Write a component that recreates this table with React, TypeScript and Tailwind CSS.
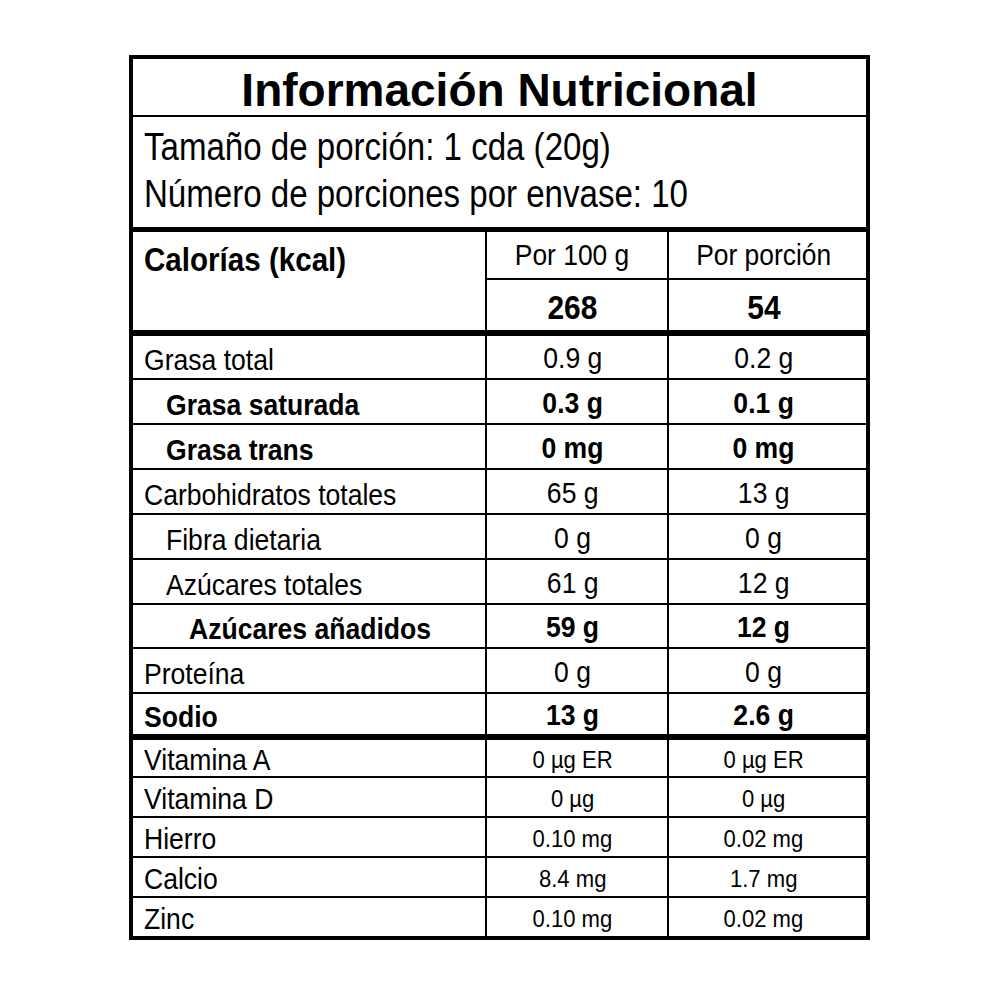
import React from 'react';

type Row = {
  label: string;
  per100: string;
  perPortion: string;
  bold?: boolean;
  indent?: 0 | 1 | 2;
  h: string;
  border: string;
};

const nutrients: Row[] = [
  { label: 'Grasa total', per100: '0.9 g', perPortion: '0.2 g', h: 'h-[44px]', border: 'border-b-2' },
  { label: 'Grasa saturada', per100: '0.3 g', perPortion: '0.1 g', bold: true, indent: 1, h: 'h-[45px]', border: 'border-b-2' },
  { label: 'Grasa trans', per100: '0 mg', perPortion: '0 mg', bold: true, indent: 1, h: 'h-[45px]', border: 'border-b-2' },
  { label: 'Carbohidratos totales', per100: '65 g', perPortion: '13 g', h: 'h-[45px]', border: 'border-b-2' },
  { label: 'Fibra dietaria', per100: '0 g', perPortion: '0 g', indent: 1, h: 'h-[45px]', border: 'border-b-2' },
  { label: 'Azúcares totales', per100: '61 g', perPortion: '12 g', indent: 1, h: 'h-[45px]', border: 'border-b-2' },
  { label: 'Azúcares añadidos', per100: '59 g', perPortion: '12 g', bold: true, indent: 2, h: 'h-[44px]', border: 'border-b-2' },
  { label: 'Proteína', per100: '0 g', perPortion: '0 g', h: 'h-[45px]', border: 'border-b-2' },
  { label: 'Sodio', per100: '13 g', perPortion: '2.6 g', bold: true, h: 'h-[46px]', border: 'border-b-[6px]' },
];

const minerals: Row[] = [
  { label: 'Vitamina A', per100: '0 µg ER', perPortion: '0 µg ER', h: 'h-[38px]', border: 'border-b-2' },
  { label: 'Vitamina D', per100: '0 µg', perPortion: '0 µg', h: 'h-[40px]', border: 'border-b-2' },
  { label: 'Hierro', per100: '0.10 mg', perPortion: '0.02 mg', h: 'h-[40px]', border: 'border-b-2' },
  { label: 'Calcio', per100: '8.4 mg', perPortion: '1.7 mg', h: 'h-[40px]', border: 'border-b-2' },
  { label: 'Zinc', per100: '0.10 mg', perPortion: '0.02 mg', h: 'h-[38px]', border: '' },
];

const indentClass = ['pl-[11px]', 'pl-[33px]', 'pl-[56px]'];

const NutrientRow: React.FC<{ row: Row }> = ({ row }) => {
  const weight = row.bold ? 'font-bold' : 'font-normal';
  return (
    <div className={`grid grid-cols-[354px_182px_197px] border-black ${row.h} ${row.border}`}>
      <div className={`flex items-center border-r-2 border-black pt-[6px] ${indentClass[row.indent ?? 0]}`}>
        <span className={`inline-block origin-left scale-x-[0.9] text-[29.5px] leading-none whitespace-nowrap ${weight}`}>{row.label}</span>
      </div>
      <div className="flex items-center justify-center border-r-2 border-black pt-[2px] pr-[9px]">
        <span className={`inline-block scale-x-[0.9] text-[29.5px] leading-none ${weight}`}>{row.per100}</span>
      </div>
      <div className="flex items-center justify-center pt-[2px] pr-[8px]">
        <span className={`inline-block scale-x-[0.9] text-[29.5px] leading-none ${weight}`}>{row.perPortion}</span>
      </div>
    </div>
  );
};

const MineralRow: React.FC<{ row: Row }> = ({ row }) => (
  <div className={`grid grid-cols-[354px_182px_197px] border-black ${row.h} ${row.border}`}>
    <div className="flex items-center border-r-2 border-black pl-[11px] pt-[4px]">
      <span className="inline-block origin-left scale-x-[0.9] text-[29.5px] leading-none">{row.label}</span>
    </div>
    <div className="flex items-center justify-center border-r-2 border-black pt-[3px] pr-[9px]">
      <span className="inline-block scale-x-[0.92] text-[24px] leading-none whitespace-nowrap">{row.per100}</span>
    </div>
    <div className="flex items-center justify-center pt-[3px] pr-[8px]">
      <span className="inline-block scale-x-[0.92] text-[24px] leading-none whitespace-nowrap">{row.perPortion}</span>
    </div>
  </div>
);

export default function App() {
  return (
    <div className="min-h-[1000px] bg-white pl-[129px] pt-[55px] text-black [font-family:'Liberation_Sans',Arial,sans-serif]">
      <div className="w-[741px] border-4 border-black">
        <div className="flex h-[58px] items-center justify-center border-b-2 border-black pt-[6px]">
          <h1 className="text-[46px] font-bold leading-none">Información Nutricional</h1>
        </div>

        <div className="h-[115px] border-b-[5px] border-black pl-[11px] pt-[7px]">
          <p className="origin-left scale-x-[0.87] text-[38px] leading-[47px] whitespace-nowrap">Tamaño de porción: 1 cda (20g)</p>
          <p className="origin-left scale-x-[0.87] text-[38px] leading-[47px] whitespace-nowrap">Número de porciones por envase: 10</p>
        </div>

        <div className="flex h-[104px] border-b-[6px] border-black">
          <div className="w-[354px] border-r-2 border-black pl-[11px] pt-[12px]">
            <span className="inline-block origin-left scale-x-[0.91] text-[32.5px] font-bold leading-none">Calorías (kcal)</span>
          </div>
          <div className="flex flex-1 flex-col">
            <div className="grid h-[48px] grid-cols-[182px_197px] border-b-2 border-black">
              <div className="flex items-center justify-center border-r-2 border-black pr-[9px]">
                <span className="inline-block scale-x-[0.88] text-[30px] leading-none">Por 100 g</span>
              </div>
              <div className="flex items-center justify-center pr-[8px]">
                <span className="inline-block scale-x-[0.88] text-[30px] leading-none">Por porción</span>
              </div>
            </div>
            <div className="grid flex-1 grid-cols-[182px_197px]">
              <div className="flex items-center justify-center border-r-2 border-black pt-[4px] pr-[9px]">
                <span className="inline-block scale-x-[0.88] text-[34px] font-bold leading-none">268</span>
              </div>
              <div className="flex items-center justify-center pt-[4px] pr-[8px]">
                <span className="inline-block scale-x-[0.88] text-[34px] font-bold leading-none">54</span>
              </div>
            </div>
          </div>
        </div>

        {nutrients.map((row) => (
          <NutrientRow key={row.label} row={row} />
        ))}
        {minerals.map((row) => (
          <MineralRow key={row.label} row={row} />
        ))}
      </div>
    </div>
  );
}
